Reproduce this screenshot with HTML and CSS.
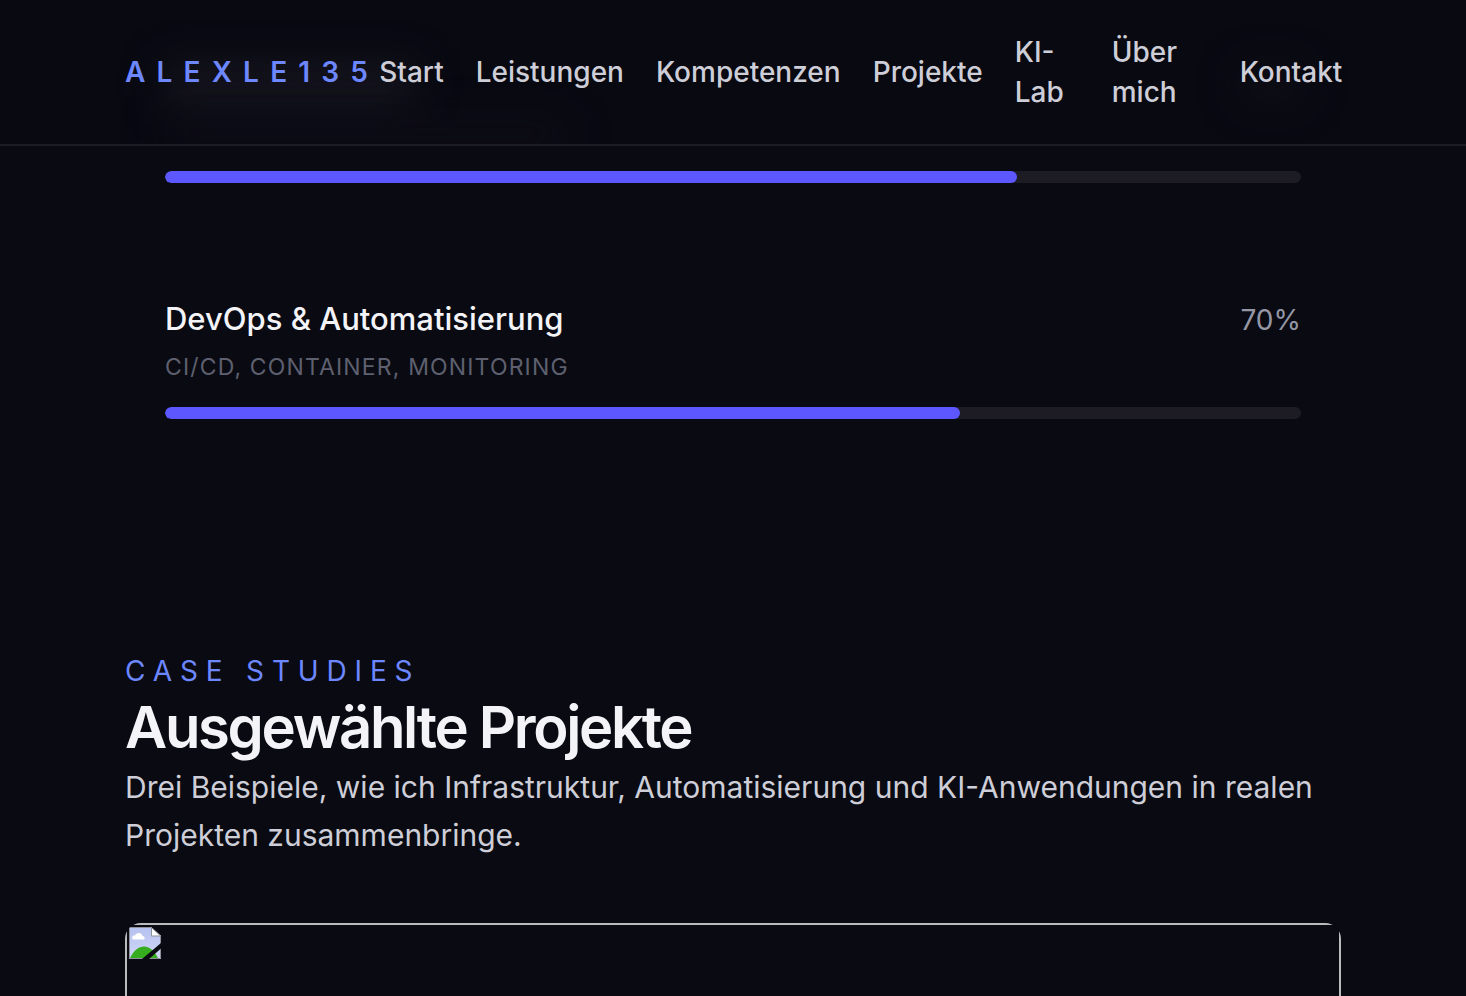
FILE: index.html
```html
<!DOCTYPE html>
<html lang="de">
<head>
<meta charset="utf-8">
<meta name="viewport" content="width=device-width, initial-scale=1">
<title>ALEXLE135</title>
<link rel="stylesheet" href="styles.css">
</head>
<body>
<header class="site-header">
  <span class="glow glow-title" aria-hidden="true"></span>
  <span class="glow glow-detail" aria-hidden="true"></span>
  <span class="glow glow-value" aria-hidden="true"></span>
  <div class="container header-row">
    <a class="brand" href="#start">ALEXLE135</a>
    <nav class="nav" aria-label="Hauptnavigation">
      <a href="#start">Start</a>
      <a href="#leistungen">Leistungen</a>
      <a href="#kompetenzen">Kompetenzen</a>
      <a href="#projekte">Projekte</a>
      <a class="wrap" href="#ki-lab">KI-Lab</a>
      <a class="wrap wrap-wide" href="#ueber-mich">Über mich</a>
      <a href="#kontakt">Kontakt</a>
    </nav>
  </div>
</header>
<main class="container page">
  <section class="skills" id="kompetenzen" aria-label="Kompetenzen">
    <div class="track" role="progressbar" aria-valuenow="75" aria-valuemin="0" aria-valuemax="100" aria-label="Kompetenz"><div class="fill" style="width:75%"></div></div>
    <article class="skill">
      <div class="skill-head">
        <h3>DevOps &amp; Automatisierung</h3>
        <span class="value">70%</span>
      </div>
      <p class="detail">CI/CD, Container, Monitoring</p>
      <div class="track" role="progressbar" aria-valuenow="70" aria-valuemin="0" aria-valuemax="100" aria-label="DevOps &amp; Automatisierung"><div class="fill" style="width:70%"></div></div>
    </article>
  </section>
  <section class="projects" id="projekte">
    <p class="eyebrow">Case Studies</p>
    <h2>Ausgewählte Projekte</h2>
    <p class="lead">Drei Beispiele, wie ich Infrastruktur, Automatisierung und KI-Anwendungen in realen Projekten zusammenbringe.</p>
    <div class="card">
      <div class="card-image">
        <svg class="placeholder" viewBox="0 0 32 32" aria-hidden="true">
          <defs>
            <linearGradient id="sky" x1="0" y1="0" x2="0" y2="1"><stop offset="0" stop-color="#b5c1ef"/><stop offset="1" stop-color="#d1d7f7"/></linearGradient>
          </defs>
          <path d="M0 0H22L32 9V32H0Z" fill="url(#sky)"/>
          <path d="M1 31C5 23 10 19.500 15 19.500C21 19.500 26 25 29 31Z" fill="#35ad1e"/>
          <path d="M4 12.500C2 10 4 8 6 8.500C7 5 13 5 13.500 9C16 9 16 12 15 12.500Z" fill="#fff"/>
          <path d="M22 0V9H32Z" fill="#fff"/>
          <path d="M22 .5H.5V31.500H31.500V9H22.500V.5L31.500 9" fill="none" stroke="#8e919a"/>
          <path d="M32 16V21.500L20 32H13Z" fill="#090a12"/>
        </svg>
      </div>
    </div>
  </section>
</main>
</body>
</html>
```
FILE: styles.css
```css
* { box-sizing: border-box; }
body {
  margin: 0;
  min-height: 100vh;
  display: flex;
  flex-direction: column;
  background: #090a12;
  color: #f4f4f8;
  font-family: Inter, "Liberation Sans", sans-serif;
  font-size: 30px;
  line-height: 48px;
}
h2, h3, p { margin: 0; }
a { color: inherit; text-decoration: none; }
.container {
  width: 100%;
  max-width: 1280px;
  margin: 0 auto;
  padding: 0 32px;
}
.site-header {
  position: sticky;
  top: 0;
  z-index: 1;
  overflow: hidden;
  background: #080911;
  border-bottom: 2px solid #1d1c25;
}
.header-row {
  position: relative;
  display: flex;
  align-items: center;
  justify-content: space-between;
  padding-top: 32px;
  padding-bottom: 32px;
}
.brand {
  color: #6d87ff;
  font-size: 28px;
  line-height: 40px;
  font-weight: 600;
  letter-spacing: 0.4em;
}
.nav {
  display: flex;
  align-items: center;
  gap: 32px;
  color: #ceced8;
  font-size: 28px;
  line-height: 40px;
  font-weight: 500;
}
.wrap { width: 65px; }
.wrap-wide { width: 96px; }
.glow {
  position: absolute;
  filter: blur(20px);
  background: #1b1922;
}
.glow-title { left: 165px; top: 68px; width: 250px; height: 32px; }
.glow-detail { left: 165px; top: 124px; width: 400px; height: 20px; background: #110f18; }
.glow-value { left: 1243px; top: 72px; width: 58px; height: 24px; background: #13111a; }
.page {
  flex: 1;
  display: flex;
  flex-direction: column;
}
.skills {
  display: flex;
  flex-direction: column;
  gap: 112px;
  padding: 25px 40px 0;
}
.track {
  height: 12px;
  border-radius: 6px;
  background: #1d1b24;
  overflow: hidden;
}
.fill {
  height: 100%;
  border-radius: 6px;
  background: #5c57ff;
}
.skill-head {
  display: flex;
  align-items: baseline;
  justify-content: space-between;
}
h3 {
  font-size: 31px;
  line-height: 48px;
  font-weight: 500;
}
.value {
  color: #9597a6;
  font-size: 28px;
  line-height: 40px;
}
.detail {
  margin: 8px 0 24px;
  color: #5e606f;
  font-size: 23px;
  line-height: 32px;
  letter-spacing: 0.05em;
  text-transform: uppercase;
}
.projects {
  flex: 1;
  display: flex;
  flex-direction: column;
  padding-top: 232px;
}
.eyebrow {
  color: #6d87ff;
  font-size: 28px;
  line-height: 40px;
  letter-spacing: 0.28em;
  text-transform: uppercase;
}
h2 {
  font-size: 58px;
  line-height: 72px;
  font-weight: 600;
  letter-spacing: -0.04em;
}
.lead { color: #ceced8; }
.card {
  flex: 1;
  display: flex;
  min-height: 72px;
  margin-top: 64px;
  border-radius: 16px 16px 0 0;
  overflow: hidden;
}
.card-image {
  flex: 1;
  padding: 2px;
  border: 2px solid #babbba;
  border-bottom: 0;
}
.placeholder {
  display: block;
  width: 32px;
  height: 32px;
}
```
